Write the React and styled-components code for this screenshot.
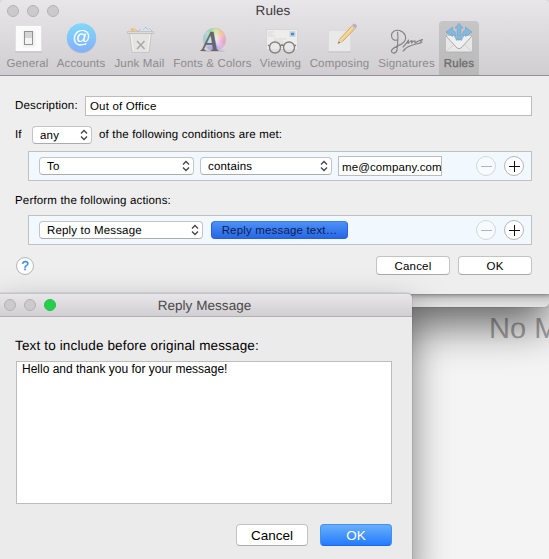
import React from 'react';
import styled, { createGlobalStyle } from 'styled-components';

const GlobalStyle = createGlobalStyle`
    * { box-sizing: border-box; }
    body {
        margin: 0;
        overflow: hidden;
        font-family: "Liberation Sans", Arial, sans-serif;
        font-size: 11.5px;
        letter-spacing: 0.17px;
        text-rendering: geometricPrecision;
        color: #000;
    }
    button, input, textarea {
        font: inherit;
        letter-spacing: inherit;
        color: inherit;
        outline: none;
    }
`

const GeneralIcon = () => (
    <svg width="32" height="32" viewBox="0 0 32 32">
        <rect x="3.5" y="2.5" width="26" height="26" fill="#fbfbfb" stroke="#e2e2e2" />
        <path d="M3 29h27" stroke="#bdbdbd" />
        <rect x="10.5" y="7.5" width="13" height="17" rx="2" fill="#f1f1f1" />
        <rect x="12.5" y="8.5" width="8" height="13" fill="#d5d5d5" stroke="#929292" />
        <path d="M13 15h7v6h-7z" fill="#f4f4f4" />
    </svg>
)

const AccountsIcon = () => (
    <svg width="32" height="32" viewBox="0 0 32 32">
        <defs>
            <linearGradient id="at" x2="0" y2="1">
                <stop stopColor="#7fd9fb" />
                <stop offset="1" stopColor="#83b0fb" />
            </linearGradient>
        </defs>
        <circle cx="16.5" cy="15.6" r="14.7" fill="#b7bdc8" />
        <circle cx="16.5" cy="14.8" r="14.6" fill="url(#at)" />
        <text x="16.3" y="19.5" fontSize="18" fill="#fff" textAnchor="middle" letterSpacing="0">@</text>
    </svg>
)

const JunkIcon = () => (
    <svg width="32" height="32" viewBox="0 0 32 32">
        <path d="M4 9l3-3 3 1 3-2 4 2 3-3 4 1 3-1 2 5z" fill="#dce3ea" />
        <path d="M5 8l3-3 4 1 3 3z" fill="#edbd83" />
        <path d="M14 8l3-2M19 7l3-3 2 3M25 5l3 3" stroke="#a8c5dc" fill="none" />
        <path d="M10 6l2 3M6 7l2 2" stroke="#f6dcba" />
        <path d="M5.5 10h22l-2.500 19.500h-17z" fill="#e5e4e2" stroke="#c9c7c5" />
        <path d="M3.500 8.500h26v2h-26z" fill="#dddbd9" stroke="#bbb9b7" strokeWidth="0.7" />
        <path d="M7 12l2.500 16M26 12l-2.500 16" stroke="#f2f2f1" />
        <path d="M13 18l7.500 8M20.500 18l-7.500 8" stroke="#aaa8a5" strokeWidth="1.500" />
    </svg>
)

const FontsIcon = () => (
    <svg width="32" height="32" viewBox="0 0 32 32">
        <defs>
            <radialGradient id="hub">
                <stop stopColor="#fff" stopOpacity="0.8" />
                <stop offset="1" stopColor="#fff" stopOpacity="0" />
            </radialGradient>
            <filter id="soft"><feGaussianBlur stdDeviation="1.500" /></filter>
            <clipPath id="disc"><circle cx="17.500" cy="16.500" r="11.500" /></clipPath>
        </defs>
        <g clipPath="url(#disc)">
            <g filter="url(#soft)">
                <path d="M17.500 16.500L3 2h14z" fill="#93dbb6" />
                <path d="M17.500 16.500L15 0l13 3z" fill="#d9e79f" />
                <path d="M17.500 16.500L25 0l10 16z" fill="#f1c5a0" />
                <path d="M17.500 16.500L33 12v18z" fill="#eba5d2" />
                <path d="M17.500 16.500L30 32H15z" fill="#d6a9ed" />
                <path d="M17.500 16.500L18 32H2z" fill="#a5a9ef" />
                <path d="M17.500 16.500L0 28V5z" fill="#9bd1dc" />
            </g>
            <circle cx="17.500" cy="16.500" r="9" fill="url(#hub)" />
        </g>
        <circle cx="17.500" cy="16.500" r="11.200" fill="none" stroke="#c4bec0" strokeWidth="0.600" />
        <ellipse cx="16" cy="28" rx="12" ry="1" fill="#aaa" opacity="0.500" />
        <text x="13.500" y="27.500" fontSize="29" fontFamily="Liberation Serif, serif" fontStyle="italic" fontWeight="bold" fill="#66666b" textAnchor="middle" letterSpacing="0" textLength="17.500" lengthAdjust="spacingAndGlyphs">A</text>
    </svg>
)

const ViewingIcon = () => (
    <svg width="32" height="32" viewBox="0 0 32 32">
        <rect x="1.500" y="6.500" width="31" height="20" fill="#eeedea" stroke="#d7d6d4" />
        <path d="M3 9h6M3 11h5M3 13h7M9 16h12M9 18h9M11 20h9" stroke="#cfcfcf" strokeWidth="0.800" strokeDasharray="2 0.600" />
        <rect x="25" y="8.500" width="5" height="5" fill="#a3c6e2" stroke="#c6d8e4" />
        <path d="M26 10h3v2h-3z" fill="#4f89bd" />
        <circle cx="10" cy="24.500" r="5.500" fill="#e6e6e6" fillOpacity="0.600" stroke="#828282" strokeWidth="1.400" />
        <circle cx="24" cy="24.500" r="5.500" fill="#e6e6e6" fillOpacity="0.600" stroke="#828282" strokeWidth="1.400" />
        <path d="M15.200 23q1.800-2 3.600 0M4.500 23l-1.500-1M29.500 23l1.500-1" fill="none" stroke="#777" strokeWidth="1.400" />
    </svg>
)

const ComposingIcon = () => (
    <svg width="32" height="32" viewBox="0 0 32 32">
        <rect x="4.500" y="7.500" width="22" height="21" fill="#e9e9e9" stroke="#dcdcdc" />
        <path d="M4 29h23" stroke="#c4c4c4" />
        <path d="M14 20.500l1.800-4.500L28.500 2.300l3 2.700L18.500 18.500z" fill="#f1cf87" stroke="#c09a5d" strokeWidth="0.700" />
        <path d="M17 17L29.500 3.500" stroke="#fae5ad" />
        <path d="M14 20.500l1.800-4.500 2.700 2.500z" fill="#ead6bb" />
        <path d="M14 20.500l1-2 1 1z" fill="#555" />
        <path d="M27.300 3.500l1.500-1.500 3 2.600-1.500 1.600z" fill="#c7cbd1" />
        <path d="M28.800 2c1-2 5 0 3 2.600z" fill="#d6a8c3" stroke="#b48da6" strokeWidth="0.600" />
    </svg>
)

const SignatureIcon = () => (
    <svg width="36" height="32" viewBox="0 0 36 32">
        <path d="M8.500 9C9.500 14 8.500 22 8 27C7 31 2 31 2.500 27.500C3.500 24 11 23 15 19C18.500 15 16 9 10.500 7.500C6 6.500 2.500 9 2.500 12.500C2.500 16 5.500 18 8 17" fill="none" stroke="#858585" strokeWidth="1.150" strokeLinecap="round" />
        <path d="M14 24C17 21 19 18 19.500 17L19 20.500C21 18.500 22 17.500 23 17.500L22.500 20C24.500 18 25.500 17.500 26 18L26 20C28.500 19 30 17 33.500 16.500C31 18.500 31 18.500 33 19C30 22 20 20 14 28L16 26.500" fill="none" stroke="#858585" strokeWidth="1.150" strokeLinecap="round" strokeLinejoin="round" />
    </svg>
)

const RulesIcon = () => (
    <svg width="32" height="32" viewBox="0 0 32 32">
        <rect x="3" y="13" width="26" height="16" fill="#e7e7e7" />
        <path d="M3 28.500l9.500-8.500M29 28.500l-9.500-8.500" stroke="#d3d3d3" />
        <path d="M3 13l11 12q2 1.500 4 0L29 13" fill="#efefef" stroke="#aaa" />
        <path d="M2.500 29h27" stroke="#a9a9a9" strokeWidth="0.700" />
        <path d="M16 0.300l4 4.700h-2.300V17h-3.400V5H12z" fill="#83b9e1" stroke="#6299c4" strokeWidth="0.500" />
        <path d="M3 9l6.500-5v3q4 1.500 4.200 10.500Q11 11.500 9.500 11v2.500z" fill="#83b9e1" stroke="#6299c4" strokeWidth="0.500" />
        <path d="M29 9l-6.500-5v3q-4 1.500-4.200 10.500Q21 11.500 22.500 11v2.500z" fill="#83b9e1" stroke="#6299c4" strokeWidth="0.500" />
    </svg>
)

const tools = [
    { label: 'General', icon: <GeneralIcon /> },
    { label: 'Accounts', icon: <AccountsIcon /> },
    { label: 'Junk Mail', icon: <JunkIcon /> },
    { label: 'Fonts & Colors', icon: <FontsIcon /> },
    { label: 'Viewing', icon: <ViewingIcon /> },
    { label: 'Composing', icon: <ComposingIcon /> },
    { label: 'Signatures', icon: <SignatureIcon /> },
    { label: 'Rules', icon: <RulesIcon />, active: true },
];

const Select = ({ width, children }) => (
    <SelectStyle $width={width}>
        <span>{children}</span>
        <svg width="8" height="12" viewBox="0 0 8 12">
            <path d="M1 4.500L4 1.500l3 3M1 7.500l3 3 3-3" fill="none" stroke="#444" strokeWidth="1.300" />
        </svg>
    </SelectStyle>
)

const PlusMinus = () => (
    <PlusMinusStyle>
        <RoundButton $size={20} $faded>
            <svg width="11" height="11"><path d="M0 5.500h11" stroke="#777" /></svg>
        </RoundButton>
        <RoundButton $size={20}>
            <svg width="11" height="11"><path d="M0 5.500h11M5.500 0v11" stroke="#111" strokeWidth="1" /></svg>
        </RoundButton>
    </PlusMinusStyle>
)

const App = () => {
    return (
        <Desktop>
            <GlobalStyle />
            <EmptyMessage>No M</EmptyMessage>
            <BackWindow />
            <RulesWindow>
                <RulesHeader>
                    <TitleBar $height={21}>
                        <Lights $left={7}><Light /><Light /><Light /></Lights>
                        <Title $dark>Rules</Title>
                    </TitleBar>
                    <Toolbar>
                        {tools.map(tool => (
                            <Tool key={tool.label} $active={tool.active}>
                                {tool.icon}
                                <span>{tool.label}</span>
                            </Tool>
                        ))}
                    </Toolbar>
                </RulesHeader>
                <RulesBody>
                    <Row>
                        <Label $width={70}>Description:</Label>
                        <TextField $width={447} defaultValue="Out of Office" />
                    </Row>
                    <MatchRow>
                        <Label $width={17}>If</Label>
                        <Select width={60}>any</Select>
                        <MatchText>of the following conditions are met:</MatchText>
                    </MatchRow>
                    <RuleBox>
                        <Select width={155}>To</Select>
                        <Select width={132}>contains</Select>
                        <TextField $width={104} $snug defaultValue="me@company.com" />
                        <PlusMinus />
                    </RuleBox>
                    <ActionsLabel>Perform the following actions:</ActionsLabel>
                    <RuleBox $gap={8}>
                        <Select width={164}>Reply to Message</Select>
                        <MessageButton>Reply message text…</MessageButton>
                        <PlusMinus />
                    </RuleBox>
                    <Footer>
                        <HelpButton $size={18}>?</HelpButton>
                        <ButtonGroup $gap={8}>
                            <Button $width={74} $height={19}>Cancel</Button>
                            <Button $width={74} $height={19}>OK</Button>
                        </ButtonGroup>
                    </Footer>
                </RulesBody>
            </RulesWindow>
            <ReplyWindow>
                <ReplyTitleBar $height={24}>
                    <Lights $left={4}><Light /><Light /><Light $green /></Lights>
                    <Title>Reply Message</Title>
                </ReplyTitleBar>
                <ReplyBody>
                    <ReplyLabel>Text to include before original message:</ReplyLabel>
                    <ReplyText defaultValue="Hello and thank you for your message!" spellCheck={false} />
                    <ReplyButtons $gap={12}>
                        <Button $width={72} $height={22}>Cancel</Button>
                        <Button $width={72} $height={22} $primary>OK</Button>
                    </ReplyButtons>
                </ReplyBody>
            </ReplyWindow>
        </Desktop>
    )
}

const Desktop = styled.div`
    position: relative;
    width: 549px;
    height: 559px;
    overflow: hidden;
    background: #f4f4f4;
`

const EmptyMessage = styled.div`
    position: absolute;
    left: 489px;
    top: 312px;
    font-size: 29px;
    line-height: 34px;
    letter-spacing: 0;
    white-space: nowrap;
    color: #a4a4a4;
`

const BackWindow = styled.div`
    position: absolute;
    left: -10px;
    top: 200px;
    width: 559px;
    height: 107px;
    border-radius: 0 0 5px 5px;
    background: linear-gradient(#b0b0b0 94px, #cfcfcf 98px, #e2e2e2 107px);
    box-shadow: 0 0 1px rgba(0, 0, 0, 0.6), 0 17px 44px rgba(0, 0, 0, 0.62);
`

const RulesWindow = styled.div`
    position: absolute;
    left: 0;
    top: 0;
    width: 549px;
    height: 294px;
    border-radius: 4px 4px 0 0;
    background: #eee;
    box-shadow: 0 0 1px rgba(0, 0, 0, 0.6), 0 2px 6px rgba(0, 0, 0, 0.2);
`

const RulesHeader = styled.div`
    height: 76px;
    border-radius: 4px 4px 0 0;
    border-bottom: 1px solid #919093;
    background: linear-gradient(#e8e6e8, #d0ced0);
`

const TitleBar = styled.div`
    display: grid;
    grid-template-columns: 1fr auto 1fr;
    align-items: center;
    height: ${props => props.$height}px;
`

const Lights = styled.div`
    display: flex;
    gap: 8px;
    padding-left: ${props => props.$left}px;
`

const Light = styled.div`
    width: 12px;
    height: 12px;
    border-radius: 50%;
    border: 1px solid ${props => props.$green ? '#1fc343' : '#b3b2b4'};
    background: ${props => props.$green ? '#25cf4c' : '#cbcacc'};
`

const Title = styled.div`
    margin-right: 3px;
    padding-top: ${props => props.$dark ? 0 : 1}px;
    font-size: 13.5px;
    line-height: 20px;
    letter-spacing: 0.05px;
    color: ${props => props.$dark ? '#3c3b3d' : '#4a494b'};
`

const Toolbar = styled.div`
    display: grid;
    grid-template-columns: 49px 58px 59px 87px 49px 69px 65px 40px;
    height: 54px;
    padding-left: 3px;
`

const Tool = styled.div`
    display: flex;
    flex-direction: column;
    align-items: center;
    padding-top: 2px;
    border-radius: 4px 4px 0 0;
    white-space: nowrap;
    line-height: 18px;
    color: ${props => props.$active ? '#6b6b6b' : '#8d8b8e'};
    background: ${props => props.$active ? 'linear-gradient(#c7c6c7, #b9b8b9)' : 'none'};
    ${props => props.$active && '-webkit-text-stroke: 0.3px #6b6b6b;'}

    svg {
        flex: none;
        overflow: visible;
    }
`

const RulesBody = styled.div`
    padding: 20px 17px 0 15px;
`

const Row = styled.div`
    display: flex;
    align-items: center;
    height: 19px;
`

const MatchRow = styled(Row)`
    margin-top: 10px;
`

const Label = styled.label`
    width: ${props => props.$width}px;
    padding-top: 2px;
    line-height: 19px;
`

const MatchText = styled.span`
    margin-left: 7px;
    padding-top: 1px;
`

const TextField = styled.input`
    width: ${props => props.$width}px;
    height: 20px;
    margin: 0;
    padding: ${props => props.$snug ? '1px 0 0 3px' : '1px 4px 0'};
    border: 1px solid #bcbcbc;
    border-radius: 0;
    background: #fff;
    ${props => props.$snug && 'letter-spacing: 0.1px;'}
`

const RuleBox = styled.div`
    display: flex;
    align-items: center;
    gap: ${props => props.$gap || 6}px;
    height: 30px;
    margin: 7px 0 0 13px;
    padding: 0 7px 0 10px;
    border: 1px solid #bfc2c5;
    background: #f1f8fe;
`

const SelectStyle = styled.div`
    display: flex;
    align-items: center;
    justify-content: space-between;
    flex: none;
    width: ${props => props.$width}px;
    height: 18px;
    padding: 0 3px 0 7px;
    border: 1px solid #c4c4c4;
    border-bottom-color: #acacac;
    border-radius: 4px;
    background: #fff;

    span {
        padding-top: 2px;
    }
`

const PlusMinusStyle = styled.div`
    display: flex;
    gap: 8px;
    margin-left: auto;
`

const RoundButton = styled.button`
    display: flex;
    align-items: center;
    justify-content: center;
    width: ${props => props.$size}px;
    height: ${props => props.$size}px;
    padding: 0;
    border: 1px solid #b5b5b5;
    border-radius: 50%;
    background: #fff;
    opacity: ${props => props.$faded ? 0.5 : 1};
`

const HelpButton = styled(RoundButton)`
    font-size: 13px;
    letter-spacing: 0;
    color: #2b86f5;
    -webkit-text-stroke: 0.3px #2b86f5;
`

const MessageButton = styled.button`
    width: 137px;
    height: 18px;
    padding: 0;
    border: 1px solid #2760dc;
    border-top-color: #3c7be8;
    border-radius: 4px;
    background: linear-gradient(#4c91f6, #2766e5);
    color: #0c1d55;
    white-space: nowrap;
`

const ActionsLabel = styled.div`
    margin-top: 11px;
    height: 16px;
    line-height: 18px;
`

const Footer = styled.div`
    display: flex;
    align-items: center;
    justify-content: space-between;
    margin-top: 11px;
    padding-left: 1px;
`

const ButtonGroup = styled.div`
    display: flex;
    gap: ${props => props.$gap}px;
`

const Button = styled.button`
    width: ${props => props.$width}px;
    height: ${props => props.$height}px;
    padding: 0;
    border: 1px solid ${props => props.$primary ? '#3f91f8' : '#c3c3c3'};
    border-bottom-color: ${props => props.$primary ? '#1a66f2' : '#a9a9a9'};
    border-radius: 4px;
    background: ${props => props.$primary ? 'linear-gradient(#69b0fa, #247bfd)' : '#fff'};
    color: ${props => props.$primary ? '#fff' : '#000'};
`

const ReplyWindow = styled.div`
    position: absolute;
    left: -1px;
    top: 293px;
    width: 413px;
    height: 280px;
    border-radius: 0 5px 0 0;
    background: #ebebeb;
    box-shadow: 0 0 1px rgba(0, 0, 0, 0.7), 0 18px 36px rgba(0, 0, 0, 0.5);
`

const ReplyTitleBar = styled(TitleBar)`
    padding-left: 1px;
    border-top: 1px solid #c5c4c6;
    border-bottom: 1px solid #b2b1b3;
    border-radius: 0 5px 0 0;
    background: linear-gradient(#e8e6e8, #d1cfd1);
`

const ReplyBody = styled.div`
    padding: 20px 20px 0 17px;
`

const ReplyLabel = styled.div`
    margin-left: -1px;
    font-size: 13.5px;
    line-height: 18px;
    letter-spacing: 0.15px;
`

const ReplyText = styled.textarea`
    display: block;
    width: 376px;
    height: 143px;
    margin: 6px 0 0;
    padding: 0 5px;
    border: 1px solid #bdbdbd;
    background: #fff;
    font-size: 12px;
    line-height: 15px;
    letter-spacing: 0;
    resize: none;
`

const ReplyButtons = styled(ButtonGroup)`
    justify-content: flex-end;
    margin-top: 20px;
    font-size: 13.5px;
    letter-spacing: 0;
`

export default App;
